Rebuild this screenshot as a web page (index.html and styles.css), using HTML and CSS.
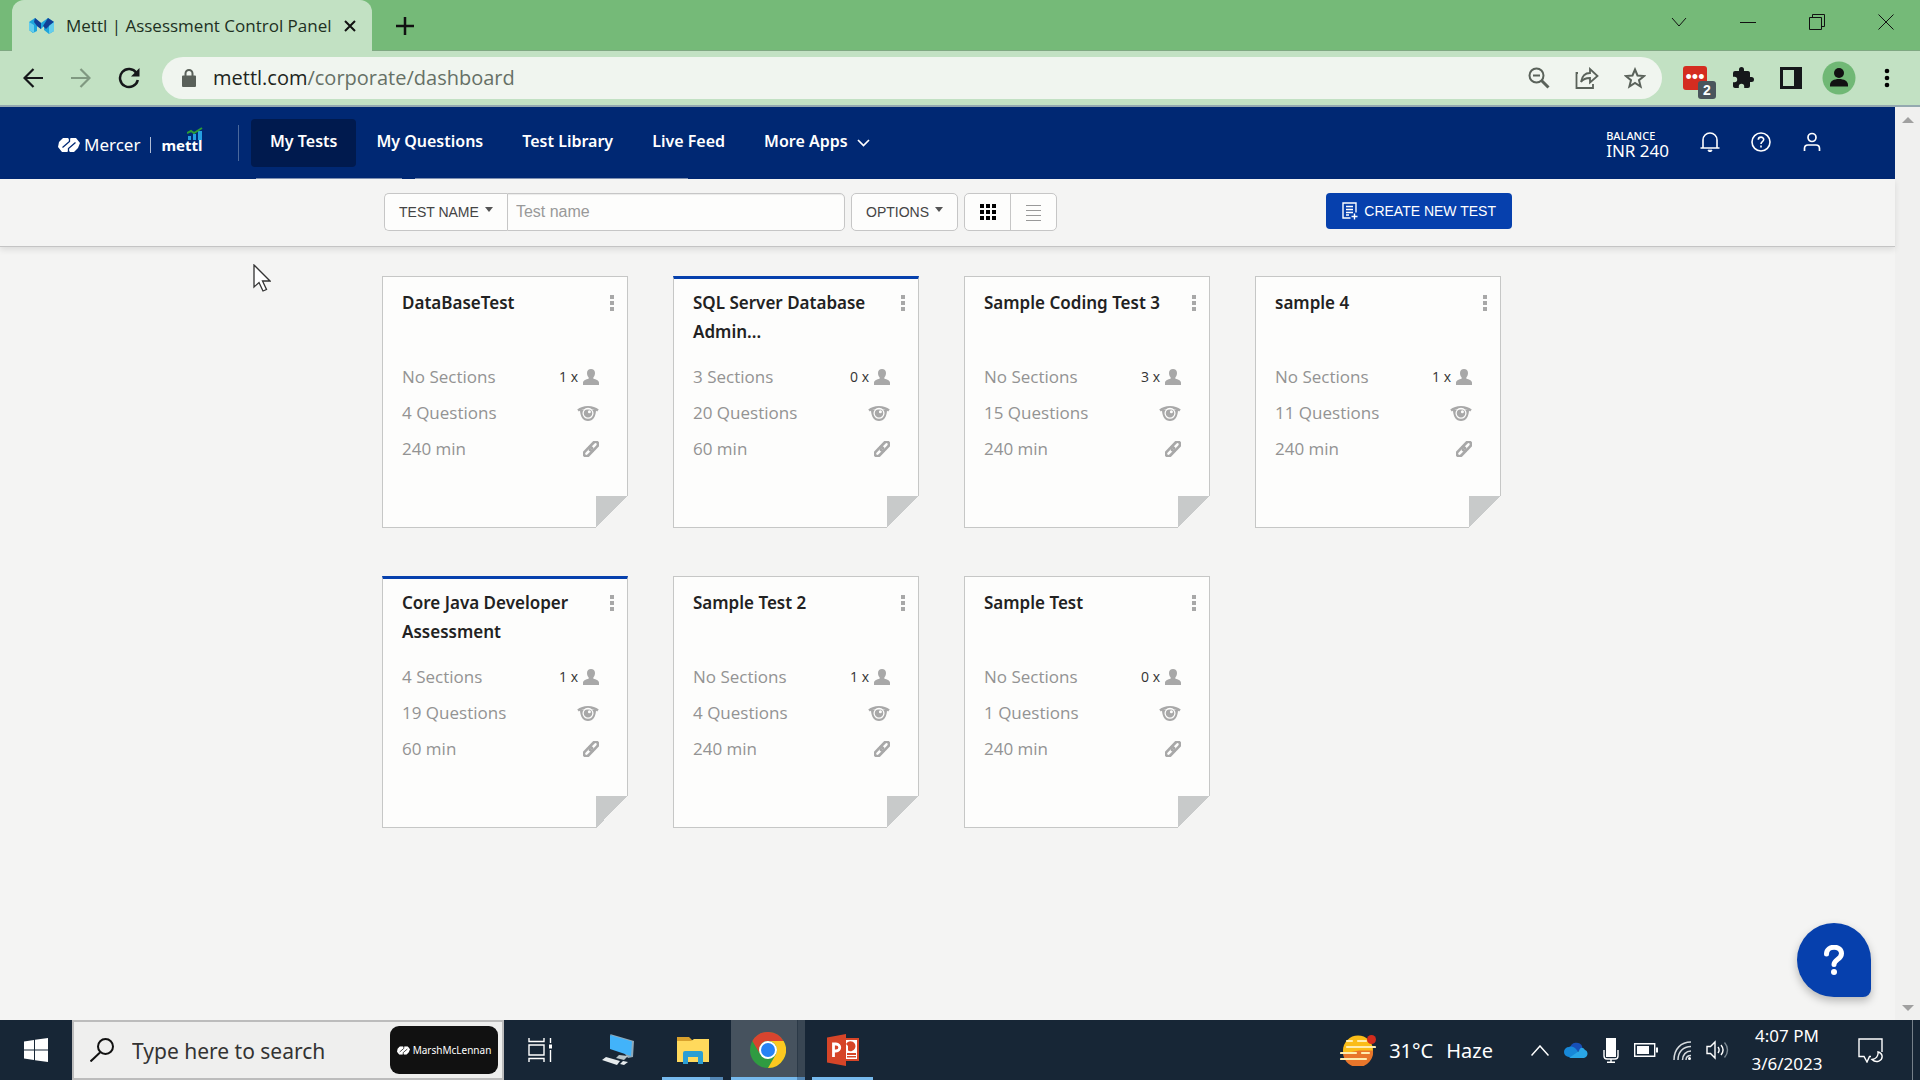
FILE: index.html
```html
<!DOCTYPE html>
<html lang="en">
<head>
<meta charset="utf-8">
<title>Mettl | Assessment Control Panel</title>
<link rel="stylesheet" href="styles.css">
</head>
<body>
<svg class="sprite" aria-hidden="true">
  <symbol id="person" viewBox="0 0 16 16"><path fill="currentColor" d="M8 0c2.400 0 4 1.500 4 4 0 1.600-.6 3.400-1.600 4.300v1.400c2.600.6 5.600 1.700 5.600 4V16H0v-2.300c0-2.300 3-3.400 5.600-4V8.300C4.600 7.400 4 5.600 4 4c0-2.500 1.600-4 4-4z"/></symbol>
  <symbol id="eye" viewBox="0 0 22 15"><path fill="none" stroke="currentColor" stroke-width="2.400" d="M1 4.500C4 2 7 1.200 11 1.200s7 .8 10 3.300"/><path fill="currentColor" d="M3 3.500h16C19 10.500 16 15 11 15S3 10.500 3 3.500z"/><circle cx="11" cy="7.300" r="4.900" fill="none" stroke="#fdfdfc" stroke-width="1.300"/><circle cx="12.400" cy="5.800" r="1.500" fill="#fdfdfc"/></symbol>
  <symbol id="link" viewBox="1.500 1.500 13 13"><g fill="none" stroke="currentColor" stroke-width="2.200" stroke-linecap="round"><path d="M6.500 6.500 10 2.900c1-1 2.400-1 3.200-.2s.8 2.200-.2 3.200L10.500 8.500c-1 1-2.300 1.100-3.300.3"/><path d="M9.500 9.500 6 13.100c-1 1-2.400 1-3.200.2s-.8-2.200.2-3.200L5.500 7.500c1-1 2.300-1.100 3.300-.3"/></g></symbol>
  <symbol id="dots" viewBox="0 0 4 16"><path fill="currentColor" d="M0 0h4v4H0zM0 6h4v4H0zM0 12h4v4H0z"/></symbol>
  <symbol id="mercer" viewBox="0 0 22 14"><path fill="#fff" d="M5 0h5l1 1 2-1h5l4 5-2 5-4 4h-4l-1-1-2 1H4L0 9l1-5z"/><path fill="none" stroke="var(--gap)" stroke-width="1.300" d="M4.500 9.500 11.500 3.500V0M17.500 4.500 10.500 10.500V14"/></symbol>
</svg>

<header class="tabstrip">
  <div class="tab">
    <svg width="25" height="16" viewBox="0 0 25 16"><path fill="#1ea5dc" d="M0 4 6 0l6 5 7-5 6 4v9l-5 3-5-4V8l-3 3-4-3v5l-4 2-4-3z"/><path fill="#123f95" d="M6 0l6 5v6L8 8 5 4zM19 0l6 4-4 3-4 4-3-3z"/><path fill="#64cdec" d="M0 4l5 3v8l-5-3zM20 8l5-4v9l-5 3z"/></svg>
    <span class="tab-title">Mettl | Assessment Control Panel</span>
    <button class="plain" aria-label="Close tab"><svg width="12" height="12" viewBox="0 0 12 12"><path d="M1 1l10 10M11 1 1 11" stroke="#111" stroke-width="2"/></svg></button>
  </div>
  <button class="plain new-tab" aria-label="New tab"><svg width="18" height="18" viewBox="0 0 18 18"><path d="M9 0v18M0 9h18" stroke="#111" stroke-width="2.500"/></svg></button>
  <div class="window-controls">
    <button class="plain" aria-label="Search tabs"><svg width="16" height="16"><path d="M1 4l7 8 7-8" fill="none" stroke="#111"/></svg></button>
    <button class="plain" aria-label="Minimize"><svg width="16" height="16"><path d="M0 8.500h16" stroke="#111"/></svg></button>
    <button class="plain" aria-label="Restore"><svg width="16" height="16"><path d="M.5 3.500h12v12H.5zM3.500 3.500v-3h12v12h-3" fill="none" stroke="#111"/></svg></button>
    <button class="plain" aria-label="Close"><svg width="16" height="16"><path d="M.5.5l15 15M15.500.5l-15 15" stroke="#111"/></svg></button>
  </div>
</header>

<div class="browser-bar">
  <button class="plain cell" aria-label="Back"><svg width="20" height="20" viewBox="0 0 20 20" fill="none" stroke="#15171a" stroke-width="2.200"><path d="M20 10H2M10.500 1 1.500 10l9 9"/></svg></button>
  <button class="plain cell" aria-label="Forward"><svg width="20" height="20" viewBox="0 0 20 20" fill="none" stroke="#809981" stroke-width="2.200"><path d="M0 10h18M9.500 1l9 9-9 9"/></svg></button>
  <button class="plain cell" aria-label="Reload"><svg width="22" height="22" viewBox="0 0 22 22" fill="none" stroke="#15171a" stroke-width="2.500"><path d="M18.500 6A9 9 0 1 0 19.800 13"/><path fill="#15171a" stroke="none" d="M21.500 1v8.500H13z"/></svg></button>
  <div class="omnibox">
    <svg class="lock" width="14" height="18" viewBox="0 0 14 18"><path fill="#596059" d="M1 6.500h12a1 1 0 0 1 1 1V17a1 1 0 0 1-1 1H1a1 1 0 0 1-1-1V7.500a1 1 0 0 1 1-1z"/><path fill="none" stroke="#596059" stroke-width="2" d="M3.500 7V4.500a3.500 3.500 0 0 1 7 0V7"/></svg>
    <span class="url">mettl.com<span class="path">/corporate/dashboard</span></span>
    <button class="plain cell" aria-label="Zoom"><svg width="22" height="22" viewBox="0 0 22 22" fill="none" stroke="#5a625a" stroke-width="2"><circle cx="8.500" cy="8.500" r="7"/><path d="M5 8.500h7"/><path d="M13.500 13.500l7 7" stroke-width="3"/></svg></button>
    <button class="plain cell" aria-label="Share"><svg width="24" height="22" viewBox="0 0 24 22" fill="none" stroke="#5a625a" stroke-width="1.800"><path d="M3 6H1.500v15H18v-4"/><path d="M6 15c1-6 4-9 9-9V2l7.500 7-7.500 6.500V11c-4 0-7 1-9 4z"/></svg></button>
    <button class="plain cell" aria-label="Bookmark"><svg width="22" height="22" viewBox="0 0 22 22" fill="none" stroke="#5a625a" stroke-width="2"><path d="M11 2.500l2.500 6 6.500.5-5 4.200 1.600 6.300L11 16l-5.600 3.500L7 13.200 2 9l6.500-.5z"/></svg></button>
  </div>
  <button class="plain cell" aria-label="Extension, 2 items"><span class="ext">•••<span class="ext-count">2</span></span></button>
  <button class="plain cell" aria-label="Extensions"><svg width="24" height="24" viewBox="0 0 24 24"><path fill="#15171a" d="M20.500 11H19V7c0-1.100-.9-2-2-2h-4V3.500a2.500 2.500 0 0 0-5 0V5H4a2 2 0 0 0-2 2v3.800h1.500a2.700 2.700 0 0 1 0 5.400H2V20c0 1.100.9 2 2 2h3.800v-1.500a2.700 2.700 0 0 1 5.400 0V22H17a2 2 0 0 0 2-2v-4h1.500a2.500 2.500 0 0 0 0-5z"/></svg></button>
  <button class="plain cell" aria-label="Side panel"><svg width="22" height="22"><path d="M1.500 1.500h19v19h-19z" fill="none" stroke="#15171a" stroke-width="3"/><path d="M14 1h7v20h-7z" fill="#15171a"/></svg></button>
  <button class="plain cell" aria-label="Profile"><svg width="34" height="34"><circle cx="17" cy="17" r="16.500" fill="#70b875"/><circle cx="17" cy="12" r="5" fill="#111"/><path fill="#111" d="M8 25.500V24c0-4 4-6 9-6s9 2 9 6v1.500z"/></svg></button>
  <button class="plain cell" aria-label="Menu"><svg width="6" height="20"><circle cx="3" cy="3" r="2.300"/><circle cx="3" cy="10" r="2.300"/><circle cx="3" cy="17" r="2.300"/></svg></button>
</div>

<div class="viewport">
  <div class="page">
    <header class="app-header">
      <a class="brand" href="#">
        <svg class="on-navy" width="22" height="14"><use href="#mercer"/></svg>
        <span class="brand-mercer">Mercer</span>
        <span class="brand-mettl">mettl<svg width="16" height="16" viewBox="0 0 16 16"><path fill="#259fe0" d="M1 9h3v4H1zM6 7h3v6H6zM11 4h4v9h-4z"/><path fill="none" stroke="#2c9c35" stroke-width="2" d="M0 6l4-2 3 2 8-5"/></svg></span>
      </a>
      <nav class="main-nav">
        <a class="active" href="#">My Tests</a>
        <a href="#">My Questions</a>
        <a href="#">Test Library</a>
        <a href="#">Live Feed</a>
        <a href="#">More Apps <svg width="13" height="8"><path d="M1 1l5.500 5.500L12 1" fill="none" stroke="#fff" stroke-width="1.700"/></svg></a>
      </nav>
      <div class="account">
        <div class="balance"><span>BALANCE</span><strong>INR 240</strong></div>
        <button class="plain" aria-label="Notifications"><svg width="20" height="20" viewBox="0 0 20 20" fill="none" stroke="#fff" stroke-width="1.600"><path d="M.5 16h19M3 16V8a7 7 0 0 1 14 0v8"/><path d="M8 18.200a2 1.400 0 0 0 4 0z" fill="#fff" stroke-width="1"/></svg></button>
        <button class="plain" aria-label="Help"><svg width="20" height="20" viewBox="0 0 20 20" fill="none" stroke="#fff" stroke-width="1.600"><circle cx="10" cy="10" r="9"/><path d="M7.300 7.800c0-3.600 5.500-3.400 5.400-.2 0 2-2.700 2.100-2.700 4.300M10 13.500v2"/></svg></button>
        <button class="plain" aria-label="Account"><svg width="20" height="20" viewBox="0 0 20 20" fill="none" stroke="#fff" stroke-width="1.700"><circle cx="10" cy="5.500" r="4"/><path d="M2.500 19v-2.500c0-2 1.500-3.500 3.500-3.500h8c2 0 3.500 1.500 3.500 3.500V19"/></svg></button>
      </div>
    </header>

    <div class="toolbar">
      <div class="container tools">
        <div class="search-group">
          <button class="btn by" type="button">TEST NAME<i class="caret"></i></button>
          <input type="text" aria-label="Test name" placeholder="Test name">
        </div>
        <button class="btn options" type="button">OPTIONS<i class="caret"></i></button>
        <div class="view-switch">
          <button type="button" aria-label="Grid view"><svg width="16" height="16"><path d="M0 0h4v4H0zM6 0h4v4H6zM12 0h4v4h-4zM0 6h4v4H0zM6 6h4v4H6zM12 6h4v4h-4zM0 12h4v4H0zM6 12h4v4H6zM12 12h4v4h-4z"/></svg></button>
          <button type="button" aria-label="List view"><svg width="15" height="17"><path d="M0 1.500h15M0 6.500h15M0 11.500h15M0 16.500h15" stroke="#999"/></svg></button>
        </div>
        <button class="create" type="button"><svg width="16" height="18" viewBox="0 0 16 18" fill="none" stroke="#fff" stroke-width="1.400"><path d="M8.500 16H1V1h13v9.500M4 4.500h7M4 7.500h7M4 10.500h7M4 13h3M12.500 11.500v6M9.500 14.500h6"/></svg>CREATE NEW TEST</button>
      </div>
    </div>

    <main class="container cards">
      <article class="card">
        <h2>DataBaseTest</h2>
        <button class="plain more" aria-label="More"><svg width="4" height="16"><use href="#dots"/></svg></button>
        <ul>
          <li>No Sections<span class="count">1 x <svg width="16" height="16"><use href="#person"/></svg></span></li>
          <li>4 Questions<a href="#" aria-label="Preview"><svg width="22" height="15"><use href="#eye"/></svg></a></li>
          <li>240 min<a href="#" aria-label="Share link"><svg width="16" height="16"><use href="#link"/></svg></a></li>
        </ul>
      </article>
      <article class="card marked">
        <h2>SQL Server Database Admin...</h2>
        <button class="plain more" aria-label="More"><svg width="4" height="16"><use href="#dots"/></svg></button>
        <ul>
          <li>3 Sections<span class="count">0 x <svg width="16" height="16"><use href="#person"/></svg></span></li>
          <li>20 Questions<a href="#" aria-label="Preview"><svg width="22" height="15"><use href="#eye"/></svg></a></li>
          <li>60 min<a href="#" aria-label="Share link"><svg width="16" height="16"><use href="#link"/></svg></a></li>
        </ul>
      </article>
      <article class="card">
        <h2>Sample Coding Test 3</h2>
        <button class="plain more" aria-label="More"><svg width="4" height="16"><use href="#dots"/></svg></button>
        <ul>
          <li>No Sections<span class="count">3 x <svg width="16" height="16"><use href="#person"/></svg></span></li>
          <li>15 Questions<a href="#" aria-label="Preview"><svg width="22" height="15"><use href="#eye"/></svg></a></li>
          <li>240 min<a href="#" aria-label="Share link"><svg width="16" height="16"><use href="#link"/></svg></a></li>
        </ul>
      </article>
      <article class="card">
        <h2>sample 4</h2>
        <button class="plain more" aria-label="More"><svg width="4" height="16"><use href="#dots"/></svg></button>
        <ul>
          <li>No Sections<span class="count">1 x <svg width="16" height="16"><use href="#person"/></svg></span></li>
          <li>11 Questions<a href="#" aria-label="Preview"><svg width="22" height="15"><use href="#eye"/></svg></a></li>
          <li>240 min<a href="#" aria-label="Share link"><svg width="16" height="16"><use href="#link"/></svg></a></li>
        </ul>
      </article>
      <article class="card marked">
        <h2>Core Java Developer Assessment</h2>
        <button class="plain more" aria-label="More"><svg width="4" height="16"><use href="#dots"/></svg></button>
        <ul>
          <li>4 Sections<span class="count">1 x <svg width="16" height="16"><use href="#person"/></svg></span></li>
          <li>19 Questions<a href="#" aria-label="Preview"><svg width="22" height="15"><use href="#eye"/></svg></a></li>
          <li>60 min<a href="#" aria-label="Share link"><svg width="16" height="16"><use href="#link"/></svg></a></li>
        </ul>
      </article>
      <article class="card">
        <h2>Sample Test 2</h2>
        <button class="plain more" aria-label="More"><svg width="4" height="16"><use href="#dots"/></svg></button>
        <ul>
          <li>No Sections<span class="count">1 x <svg width="16" height="16"><use href="#person"/></svg></span></li>
          <li>4 Questions<a href="#" aria-label="Preview"><svg width="22" height="15"><use href="#eye"/></svg></a></li>
          <li>240 min<a href="#" aria-label="Share link"><svg width="16" height="16"><use href="#link"/></svg></a></li>
        </ul>
      </article>
      <article class="card">
        <h2>Sample Test</h2>
        <button class="plain more" aria-label="More"><svg width="4" height="16"><use href="#dots"/></svg></button>
        <ul>
          <li>No Sections<span class="count">0 x <svg width="16" height="16"><use href="#person"/></svg></span></li>
          <li>1 Questions<a href="#" aria-label="Preview"><svg width="22" height="15"><use href="#eye"/></svg></a></li>
          <li>240 min<a href="#" aria-label="Share link"><svg width="16" height="16"><use href="#link"/></svg></a></li>
        </ul>
      </article>
    </main>
    <button class="help" aria-label="Get help"><svg width="22" height="30" viewBox="0 0 22 30"><path d="M3.500 9c0-9 15-9 15-.5 0 6-7.500 6-7.500 11" fill="none" stroke="#fff" stroke-width="5" stroke-linecap="round"/><circle cx="11" cy="27" r="3" fill="#fff"/></svg></button>
  </div>
  <div class="scrollbar" aria-hidden="true"><i class="up"></i><i class="down"></i></div>
</div>

<footer class="taskbar">
  <button class="plain start" aria-label="Start"><svg width="24" height="24" viewBox="0 0 24 24"><path fill="#fff" d="M0 3.500 10 2v9.400H0zM11 1.800 24 0v11.400H11zM0 12.500h10V22L0 20.500zM11 12.500h13V24l-13-1.800z"/></svg></button>
  <label class="task-search">
    <svg width="24" height="24" viewBox="0 0 24 24" fill="none" stroke="#111" stroke-width="2"><circle cx="15.500" cy="8.500" r="7.500"/><path d="M10 14.500.5 23.500"/></svg>
    <input type="text" aria-label="Search" placeholder="Type here to search">
    <span class="marsh"><svg class="on-black" width="13" height="9" viewBox="0 0 22 14"><use href="#mercer"/></svg>MarshMcLennan</span>
  </label>
  <div class="apps">
    <button class="plain task-view" aria-label="Task view"><svg width="24" height="24" fill="none" stroke="#fff" stroke-width="1.400"><path d="M1 0v3.500h15V0M1 7h15v10H1zM1 24v-3.500h15V24M22.500 0v5M22.500 12v12"/><path d="M21 6.500h3v4h-3z" fill="#fff" stroke="none"/></svg></button>
    <button class="plain" aria-label="Remote desktop"><svg width="34" height="32" viewBox="0 0 34 32"><path fill="#8fa9b9" d="M9 0l24 7-1 16-5 1z"/><path fill="#42b3fa" d="M9 1l22 6.500-1 14.500L9 15z"/><path fill="#b9c5ca" d="M18 21l9 1-4 4-8-2z"/><path fill="#e7ebed" d="M5 23l14 4-3 4-15-5zM22 27l5 1-4 3-4-1z"/></svg></button>
    <button class="plain open stacked" aria-label="File Explorer"><svg width="32" height="28" viewBox="0 0 32 28"><path fill="#d9a12d" d="M0 1h12l3 3v5H0z"/><path fill="#ffd95c" d="M0 5h14l3-2h15v23H0z"/><path fill="#2b9ed4" d="M8 15h16a2 2 0 0 1 2 2v11h-5v-7H11v7H6V17a2 2 0 0 1 2-2z"/></svg></button>
    <button class="plain open current" aria-label="Google Chrome"><svg width="36" height="36" viewBox="0 0 36 36"><circle cx="18" cy="18" r="18" fill="#2f9b41"/><path fill="#d9442f" d="M2.400 9A18 18 0 0 1 33.600 9H18a9 9 0 0 0-7.800 13.500z"/><path fill="#fcc820" d="M33.600 9A18 18 0 0 1 18 36l7.800-13.500A9 9 0 0 0 18 9z"/><circle cx="18" cy="18" r="9" fill="#fff"/><circle cx="18" cy="18" r="7" fill="#2682f5"/></svg></button>
    <button class="plain open" aria-label="PowerPoint"><svg width="32" height="32" viewBox="0 0 32 32"><path fill="#d64528" d="M14 4h18v23H14z"/><path fill="#fff" d="M17 6h13v19H17z"/><path fill="#d64528" d="M19 10a5 5 0 1 1 2 6.500V12zM20 19h9v2h-9zM20 22h9v1.500h-9zM0 3.500 19 0v32L0 28.500z"/><path fill="none" stroke="#fff" stroke-width="2.800" d="M6.500 23V10H9c5 0 5 7 0 7H7"/></svg></button>
  </div>
  <div class="tray">
    <span class="weather"><svg width="36" height="31" viewBox="0 0 36 31"><circle cx="18" cy="15.500" r="15" fill="#fbbd18"/><path fill="#e8762b" d="M33 15.500a15 15 0 0 1-30 3l16-3z"/><path stroke="#ffedb0" stroke-width="2.200" stroke-linecap="round" d="M7 6h5M18 6h8M7 12h28M1 18h15M22 18h7M1 24h25"/><circle cx="31.500" cy="4.500" r="4.500" fill="#d22c1d"/></svg><span>31°C</span><span>Haze</span></span>
    <svg class="chev" width="18" height="11"><path d="M.5 10.500 9 1l8.500 9.500" fill="none" stroke="#fff" stroke-width="1.500"/></svg>
    <svg width="24" height="16" viewBox="0 0 24 16"><path fill="#174fb7" d="M6 6a6.500 6.500 0 0 1 12-2l1 5H6z"/><path fill="#1788d8" d="M5 5c3-1 5 0 7 2l6 8H5A5 5 0 0 1 5 5z"/><path fill="#2aa6e6" d="M5 16l10-7c1-4 4-4 6-1 3 .5 4 7-1 8z"/></svg>
    <svg width="16" height="25" fill="none" stroke="#fff" stroke-width="1.400"><path d="M3 0h10v19H3z" fill="#fff" stroke="none"/><path d="M1 12v6c0 2 1 3 3 3h8c2 0 3-1 3-3v-6M8 21v3.500M4 24.300h8"/></svg>
    <svg width="24" height="14"><path d="M.7.7h20v12.600H.7z" fill="none" stroke="#fff" stroke-width="1.400"/><path d="M3 3h12v8H3zM22 4.500h2v5h-2z" fill="#fff"/></svg>
    <svg width="18" height="19" fill="none" stroke="#d5dade" stroke-width="1.500"><path d="M1 19C1 8 8 1 18 1M5 19C5 11 10 5.500 18 5.500M9.500 19c0-5 3.500-9 8.500-9M13 19c0-3 2-4.500 5-4.500"/><circle cx="16.500" cy="17.500" r="1.500" fill="#fff" stroke="none"/></svg>
    <svg width="23" height="20" fill="none" stroke="#fff" stroke-width="1.400"><path d="M1 6.500h3.500L9 2v16l-4.500-4.500H1zM12 7c1.500 2 1.500 4 0 6M15 5c2.500 3 2.500 7 0 10"/><path stroke="#7a8791" d="M18.500 2.500c4 4.500 4 10.500 0 15"/></svg>
    <time class="clock" datetime="2023-03-06T16:07">4:07 PM<br>3/6/2023</time>
    <svg width="25" height="25" fill="none" stroke="#fff" stroke-width="1.400"><path d="M13 18.500h-1.500L9 24l-3-5.500H1V1h23v13"/><path d="M20 14c.5 4-2 7-6 7.500 4 4 11 1.500 10-4-.5-2-2-3-4-3.500z"/></svg>
  </div>
</footer>

<svg class="pointer" width="18" height="28" viewBox="0 0 18 28"><path d="M1 1v22l5-4.500 4 8.500 3.500-1.500-4-8.500H17z" fill="#fff" stroke="#333" stroke-width="1.300"/></svg>
</body>
</html>
```
FILE: styles.css
```css
* { box-sizing: border-box; }
body {
  margin: 0;
  min-height: 100vh;
  display: flex;
  flex-direction: column;
  font-family: "Noto Sans", sans-serif;
  font-size: 17px;
  color: #222;
  background: #f4f4f3;
}
svg { display: block; flex: none; }
a { color: inherit; text-decoration: none; }
.sprite { position: absolute; width: 0; height: 0; }
.plain {
  display: flex;
  align-items: center;
  justify-content: center;
  padding: 0;
  border: 0;
  background: none;
  font: inherit;
}

/* Browser window */
.tabstrip {
  display: flex;
  height: 51px;
  padding-left: 12px;
  background: #75ba78;
  box-shadow: inset 0 -1px #7fa882;
}
.tab {
  display: flex;
  align-items: center;
  width: 360px;
  padding: 0 18px 0 17px;
  gap: 12px;
  border-radius: 12px 12px 0 0;
  background: #c2e1c3;
}
.tab-title { flex: 1; font: 17px/24px "Open Sans", sans-serif; white-space: nowrap; color: #20301f; }
.new-tab { width: 66px; }
.window-controls { display: flex; margin-left: auto; padding-bottom: 8px; }
.window-controls button { width: 69px; }
.browser-bar {
  display: flex;
  align-items: center;
  height: 56px;
  padding: 0 9px;
  background: #c2e1c3;
  border-bottom: 2px solid #94a9b0;
}
.cell { width: 48px; height: 48px; }
.omnibox {
  flex: 1;
  display: flex;
  align-items: center;
  height: 42px;
  margin: 0 9px;
  padding: 0 3px 0 20px;
  border-radius: 21px;
  background: #f0f5ef;
}
.url { flex: 1; padding-left: 17px; font: 20px/28px "Open Sans", sans-serif; color: #202420; }
.path { color: #667066; }
.ext {
  position: relative;
  width: 24px;
  height: 24px;
  border-radius: 3px;
  background: #d42c20;
  color: #fff;
  font: 18px/22px "Liberation Sans", sans-serif;
}
.ext-count {
  position: absolute;
  left: 15px;
  top: 15px;
  width: 18px;
  height: 18px;
  border-radius: 3px;
  background: #4a555c;
  font-size: 14px;
  font-weight: bold;
  line-height: 18px;
}

/* Page */
.viewport { flex: 1; display: flex; }
.page { flex: 1; position: relative; }
.scrollbar {
  display: flex;
  flex-direction: column;
  justify-content: space-between;
  align-items: center;
  width: 25px;
  padding: 10px 0 9px;
  background: #f0f0ef;
}
.up, .down { border: 6px solid transparent; }
.up { border-top: 0; border-bottom-color: #a0a0a0; }
.down { border-bottom: 0; border-top-color: #a0a0a0; }
.container { max-width: 1131px; margin: 0 auto; }

.app-header {
  display: flex;
  align-items: center;
  height: 72px;
  padding: 0 73px 0 58px;
  background: linear-gradient(to right, transparent 256px, #8092b4 256px 402px, transparent 402px 415px, #8092b4 415px 688px, transparent 688px) bottom / 100% 1px no-repeat #002873;
  color: #fff;
}
.brand { display: flex; align-items: center; width: 181px; height: 36px; border-right: 1px solid #4a689c; padding-top: 4px; }
.on-navy { --gap: #002873; }
.on-black { --gap: #111; }
.brand-mercer { padding: 0 10px 0 4px; line-height: 24px; }
.brand-mettl {
  position: relative;
  padding-left: 10px;
  border-left: 1px solid #b0bdd5;
  font: bold 15px/16px "Noto Sans", sans-serif;
}
.brand-mettl svg { position: absolute; right: 0; top: -10px; }
.main-nav { display: flex; gap: 1px; padding-left: 12px; font-size: 16px; font-weight: 600; line-height: 44px; }
.main-nav a { display: flex; align-items: center; gap: 9px; height: 48px; padding: 0 19px 4px; border-radius: 4px; }
.main-nav svg { margin-top: 4px; }
.main-nav .active { background: #001a4e; }
.account { display: flex; align-items: center; gap: 31px; margin-left: auto; padding-bottom: 2px; }
.balance { display: flex; flex-direction: column; padding-top: 3px; }
.balance span { font-size: 11px; line-height: 13px; font-weight: 500; }
.balance strong { font-size: 17px; line-height: 17px; font-weight: 400; }

.toolbar {
  padding: 14px 0 15px;
  border-bottom: 1px solid #c4c4c4;
  box-shadow: 0 3px 6px #00000018;
}
.tools {
  display: flex;
  gap: 6px;
  padding: 0 1px 0 2px;
  font: 14px/36px "Liberation Sans", sans-serif;
}
.search-group { display: flex; flex: 0 1 461px; }
.btn, .view-switch, .search-group input {
  height: 38px;
  border: 1px solid #c6c6c6;
  border-radius: 5px;
  background: #fdfdfc;
  font: inherit;
  color: #444;
}
.btn { display: flex; align-items: center; gap: 6px; padding: 0 14px; }
.btn.by { border-radius: 5px 0 0 5px; border-right: 0; }
.options { width: 107px; }
.caret { border: 4px solid transparent; border-top: 5px solid #555; border-bottom: 0; margin-bottom: 5px; }
.search-group input { flex: 1; min-width: 0; padding: 0 8px; font-size: 16px; border-radius: 0 5px 5px 0; box-shadow: inset 0 1px 1px #00000013; }
input::placeholder { color: #999; opacity: 1; }
.view-switch { display: flex; width: 93px; }
.view-switch button { flex: 1; display: flex; align-items: center; justify-content: center; border: 0; padding: 0; background: none; }
.view-switch button + button { border-left: 1px solid #c6c6c6; }
.create {
  display: flex;
  align-items: center;
  gap: 6px;
  height: 36px;
  margin-left: auto;
  padding: 0 16px;
  border: 0;
  border-radius: 4px;
  background: #0640ad;
  color: #fff;
  font: inherit;
}

.cards {
  display: grid;
  grid-template-columns: repeat(auto-fill, 246px);
  gap: 48px 45px;
  padding: 29px 0;
}
.card {
  position: relative;
  height: 252px;
  padding: 11px 28px 0 19px;
  border: 1px solid #c6c7c6;
  background: #fdfdfc;
}
.card::after {
  content: "";
  position: absolute;
  right: -1px;
  bottom: -1px;
  width: 32px;
  height: 32px;
  background: linear-gradient(to bottom right, #c8caca 50%, #f4f4f3 50%);
}
.marked { border-top: 3px solid #0640ad; padding-top: 9px; }
.card h2 { width: 185px; height: 71px; margin: 0; font-size: 17px; line-height: 29px; font-weight: 600; }
.more { position: absolute; right: 13px; top: 18px; color: #aaa; }
.marked .more { top: 16px; }
.card ul { margin: 0; padding: 0; list-style: none; font-family: "Open Sans", sans-serif; line-height: 36px; color: #939393; }
.card li { display: flex; align-items: center; justify-content: space-between; height: 36px; }
.card svg { color: #a8a8a8; }
.count { display: flex; align-items: center; gap: 5px; font-size: 14px; color: #333; }

.help {
  position: absolute;
  right: 24px;
  bottom: 23px;
  display: flex;
  align-items: center;
  justify-content: center;
  width: 74px;
  height: 74px;
  border: 0;
  border-radius: 37px 37px 8px 37px;
  background: #0640ad;
  box-shadow: 0 4px 8px #00000040;
}
.pointer { position: absolute; left: 253px; top: 264px; }

/* Taskbar */
.taskbar { display: flex; height: 60px; background: #172636; color: #fff; }
.start { width: 72px; }
.task-search {
  display: flex;
  align-items: center;
  width: 432px;
  padding: 0 4px 0 16px;
  border: 2px solid #bcbcbc;
  background: #efefee;
}
.task-search input {
  flex: 1;
  min-width: 0;
  padding: 2px 0 0 18px;
  border: 0;
  background: none;
  font: 21px/30px "Noto Sans", sans-serif;
}
.task-search input::placeholder { color: #333; }
.marsh {
  display: flex;
  align-items: center;
  justify-content: center;
  gap: 3px;
  width: 108px;
  height: 48px;
  border-radius: 9px;
  background: #111;
  color: #fff;
  font-size: 10px;
}
.apps { display: flex; }
.apps button { width: 75px; border-bottom: 3px solid transparent; border-top: 3px solid transparent; }
.apps .task-view { width: 72px; margin-right: 4px; }
.open { background: linear-gradient(#76b9ed, #76b9ed) center bottom / 61px 3px no-repeat border-box; }
.stacked { background: linear-gradient(to right, #76b9ed 48px, #5386b4 48px) center bottom / 61px 3px no-repeat border-box; }
.current {
  background:
    linear-gradient(to right, transparent 1px, #76b9ed 1px 67px, #5386b4 67px) center bottom / 75px 3px no-repeat border-box,
    linear-gradient(to right, transparent 1px, #46525e 1px 67px, #2b3947 67px 68px, #394653 68px) border-box;
}
.tray { display: flex; align-items: center; gap: 15px; margin-left: auto; margin-right: 7px; padding-right: 29px; border-right: 1px solid #76808a; }
.weather { display: flex; align-items: center; gap: 13px; font-size: 20px; padding-right: 23px; }
.clock { width: 76px; margin: 0 18px 0 5px; text-align: center; white-space: nowrap; line-height: 28px; }
```
